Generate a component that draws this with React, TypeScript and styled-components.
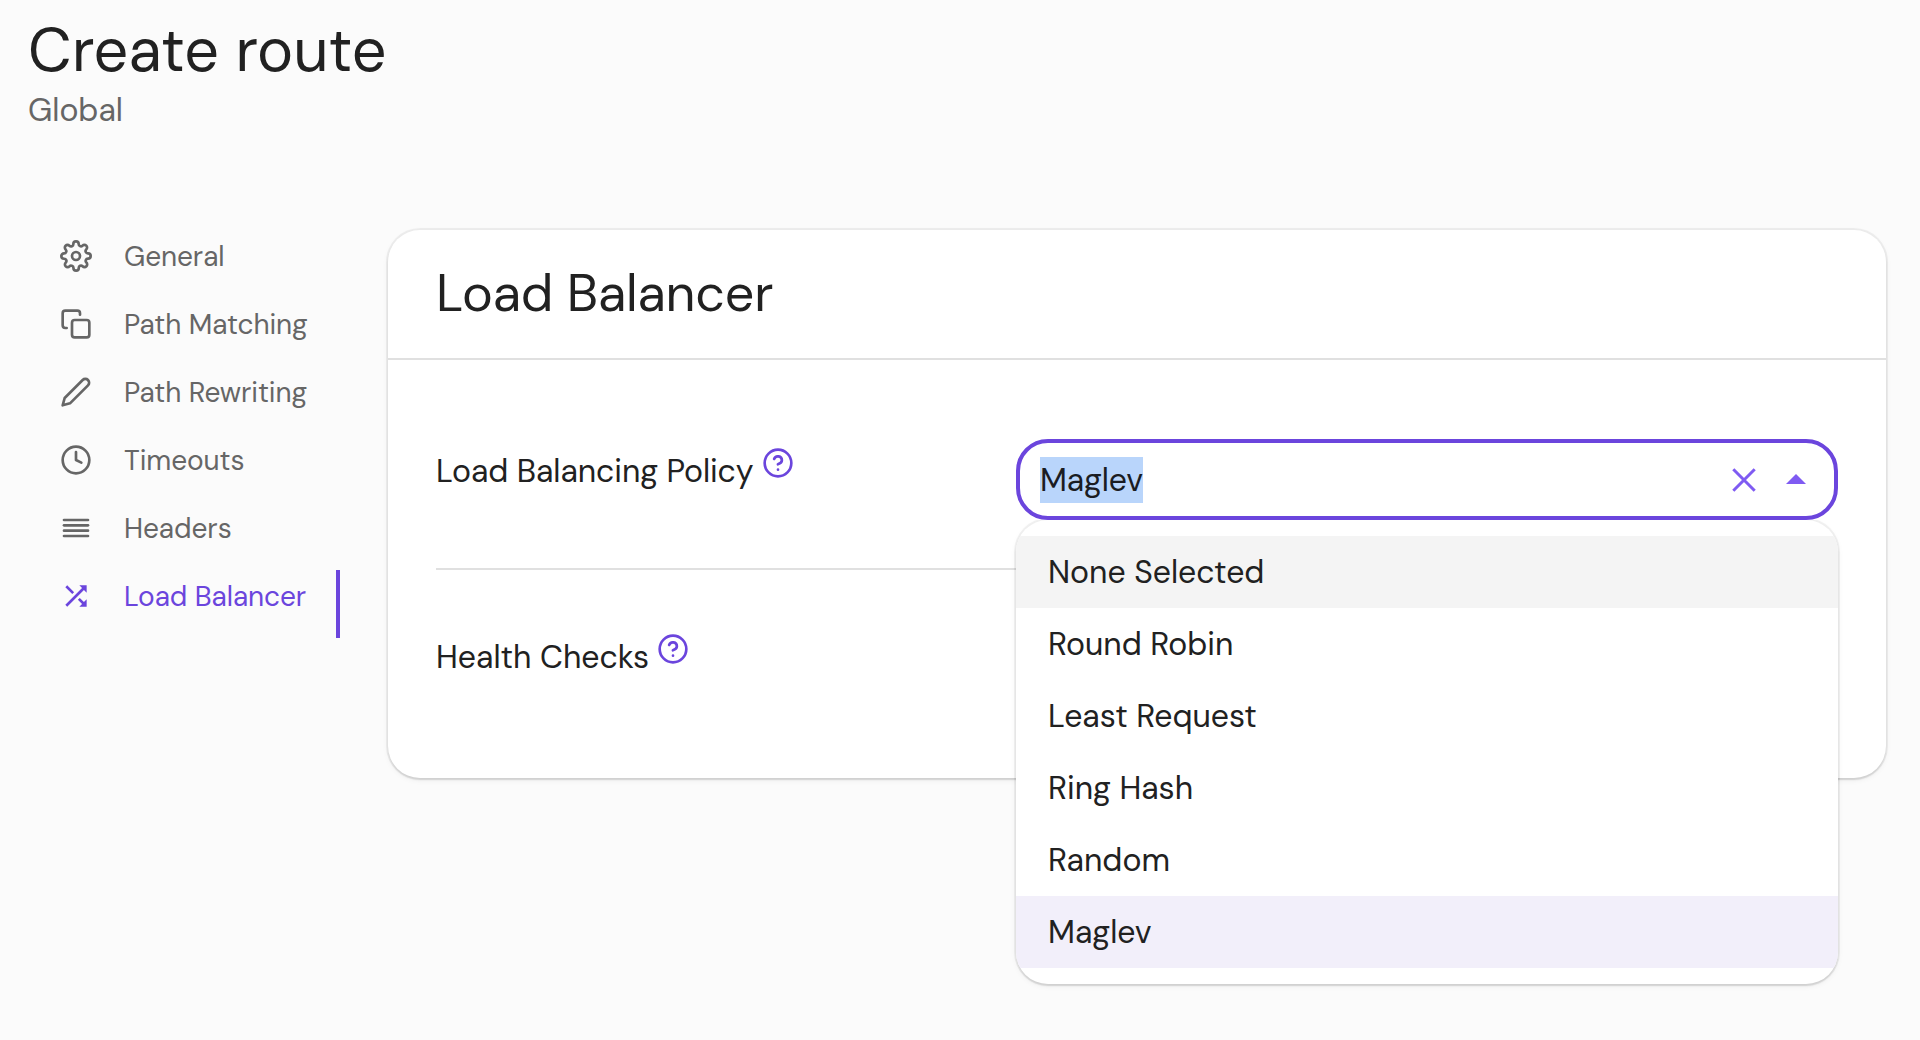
import React from "react";
import styled, { createGlobalStyle } from "styled-components";
import { FiAlignJustify, FiClock, FiCopy, FiEdit2, FiHelpCircle, FiSettings } from "react-icons/fi";
import { MdShuffle } from "react-icons/md";

const GlobalStyle = createGlobalStyle`
  * { box-sizing: border-box; }
  body {
    margin: 0;
    background: #fbfbfb;
    color: #212121;
    font-family: "DM Sans", "Open Sans", sans-serif;
    font-size: 32px;
    -webkit-font-smoothing: antialiased;
  }
`;

const accent = "#6b45dd";

const Page = styled.main`
  min-height: 1040px;
  padding: 10px 34px 0 28px;
  overflow: hidden;
`;

const PageHeader = styled.header`
  height: 220px;
`;

const Title = styled.h1`
  margin: 0;
  font-size: 61px;
  font-weight: 400;
  line-height: 80px;
  letter-spacing: 0.2px;
`;

const Subtitle = styled.p`
  margin: 0;
  color: #666;
  line-height: 40px;
`;

const Body = styled.div`
  display: flex;
  align-items: flex-start;
`;

const Nav = styled.nav`
  width: 312px;
  flex: none;
  margin-right: 48px;
`;

const NavItem = styled.a<{ $active?: boolean }>`
  display: flex;
  align-items: flex-start;
  height: 68px;
  padding: 10px 0 0 32px;
  gap: 32px;
  font-size: 28px;
  line-height: 34px;
  letter-spacing: -0.06px;
  white-space: nowrap;
  color: ${(p) => (p.$active ? accent : "#666")};
  border-right: 4px solid ${(p) => (p.$active ? accent : "transparent")};

  svg {
    width: 32px;
    height: 32px;
    flex: none;
  }
`;

const Card = styled.section`
  flex: 1;
  height: 548px;
  background: #fff;
  border-radius: 32px;
  box-shadow: 0 0 0 2px rgba(0, 0, 0, 0.05), 0 2px 2px rgba(0, 0, 0, 0.09), 0 2px 6px rgba(0, 0, 0, 0.06);
`;

const CardTitle = styled.h2`
  display: flex;
  align-items: center;
  height: 130px;
  margin: 0;
  padding: 0 48px 2px;
  border-bottom: 2px solid #e0e0e0;
  font-size: 52px;
  font-weight: 400;
  letter-spacing: -0.2px;
`;

const Field = styled.div<{ $divided?: boolean }>`
  display: flex;
  justify-content: space-between;
  align-items: flex-start;
  height: ${(p) => (p.$divided ? "210px" : "208px")};
  margin: 0 48px;
  padding-top: ${(p) => (p.$divided ? "79px" : "67px")};
  border-bottom: ${(p) => (p.$divided ? "2px solid #e0e0e0" : "none")};
`;

const FieldLabel = styled.label<{ $drop?: number; $tracking?: number }>`
  display: flex;
  gap: 8px;
  padding-top: ${(p) => p.$drop ?? 0}px;
  line-height: 40px;
  letter-spacing: ${(p) => p.$tracking ?? 0}px;

  svg {
    width: 32px;
    height: 32px;
    margin-top: -4px;
    color: ${accent};
  }
`;

const Combo = styled.div`
  position: relative;
  width: 822px;
`;

const ComboBox = styled.div`
  display: flex;
  align-items: center;
  height: 81px;
  padding: 1px 14px 0 20px;
  background: #fff;
  border: 4px solid ${accent};
  border-radius: 32px;
`;

const SelectedValue = styled.span`
  height: 46px;
  line-height: 46px;
  letter-spacing: -0.12px;
  background: #b9d5fb;
  color: #1a1c22;
`;

const ComboActions = styled.span`
  display: flex;
  align-items: center;
  margin-left: auto;
  gap: 8px;
  color: #7f5bf2;
`;

const Menu = styled.ul`
  position: absolute;
  top: 81px;
  left: 0;
  width: 822px;
  margin: 0;
  padding: 16px 0;
  list-style: none;
  background: #fff;
  border-radius: 32px;
  z-index: 1;
  box-shadow: 0 0 0 2px rgba(0, 0, 0, 0.05), 0 2px 2px rgba(0, 0, 0, 0.09), 0 2px 6px rgba(0, 0, 0, 0.06);
  clip-path: inset(0 -12px -12px -12px);
`;

const OptionList = styled.div`
  overflow: hidden;
  margin: -16px 0;
  padding: 16px 0;
  border-radius: 32px;
`;

const Option = styled.li<{ $tone?: string }>`
  height: 72px;
  padding: 0 32px;
  line-height: 72px;
  background: ${(p) => p.$tone ?? "transparent"};
`;

const navItems = [
  { label: "General", icon: <FiSettings /> },
  { label: "Path Matching", icon: <FiCopy /> },
  { label: "Path Rewriting", icon: <FiEdit2 /> },
  { label: "Timeouts", icon: <FiClock /> },
  { label: "Headers", icon: <FiAlignJustify /> },
  { label: "Load Balancer", icon: <MdShuffle />, active: true },
];

const options = [
  { label: "None Selected", tone: "#f4f4f4" },
  { label: "Round Robin" },
  { label: "Least Request" },
  { label: "Ring Hash" },
  { label: "Random" },
  { label: "Maglev", tone: "#f2effa" },
];

export default function App() {
  return (
    <Page>
      <GlobalStyle />
      <PageHeader>
        <Title>Create route</Title>
        <Subtitle>Global</Subtitle>
      </PageHeader>
      <Body>
        <Nav>
          {navItems.map((item) => (
            <NavItem key={item.label} $active={item.active}>
              {item.icon}
              <span>{item.label}</span>
            </NavItem>
          ))}
        </Nav>
        <Card>
          <CardTitle>Load Balancer</CardTitle>
          <Field $divided>
            <FieldLabel $drop={12} $tracking={-0.07}>
              Load Balancing Policy
              <FiHelpCircle />
            </FieldLabel>
            <Combo>
              <ComboBox>
                <SelectedValue>Maglev</SelectedValue>
                <ComboActions>
                  <svg width="40" height="40" viewBox="0 0 40 40" fill="none" stroke="currentColor" strokeWidth="3">
                    <path d="M9.3 9.3 30.7 30.7M30.7 9.3 9.3 30.7" />
                  </svg>
                  <svg width="48" height="48" viewBox="0 0 24 24" fill="currentColor">
                    <path d="m7 14 5-5 5 5z" />
                  </svg>
                </ComboActions>
              </ComboBox>
              <Menu>
                <OptionList>
                  {options.map((option) => (
                    <Option key={option.label} $tone={option.tone}>
                      {option.label}
                    </Option>
                  ))}
                </OptionList>
              </Menu>
            </Combo>
          </Field>
          <Field>
            <FieldLabel>
              Health Checks
              <FiHelpCircle />
            </FieldLabel>
          </Field>
        </Card>
      </Body>
    </Page>
  );
}
